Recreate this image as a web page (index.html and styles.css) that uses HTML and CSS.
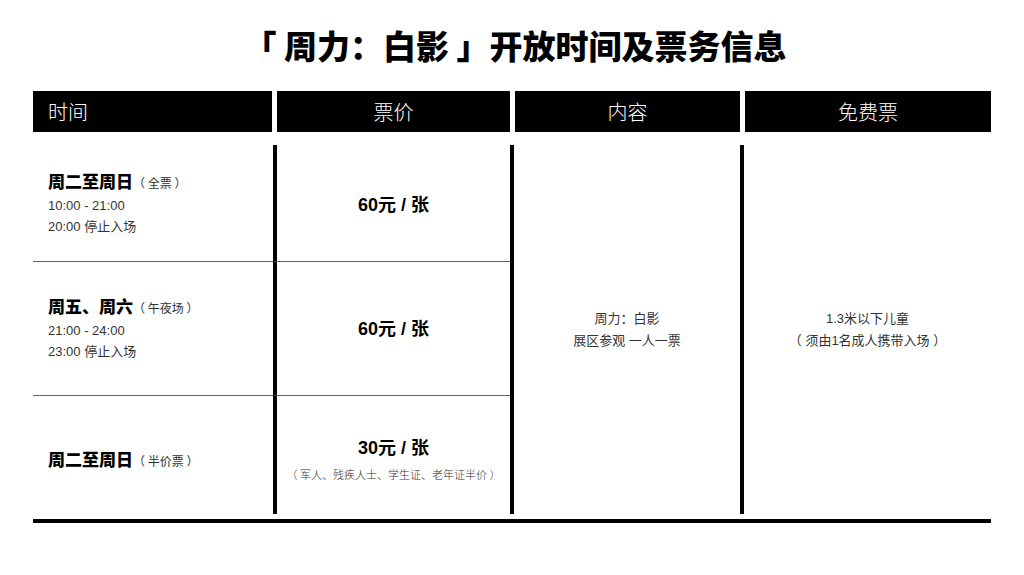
FILE: index.html
```html
<!DOCTYPE html>
<html lang="zh">
<head>
<meta charset="utf-8">
<title>周力：白影 开放时间及票务信息</title>
<link rel="stylesheet" href="styles.css">
</head>
<body>
<div class="page">
  <h1 class="title">「 周力：白影 」开放时间及票务信息</h1>
  <div class="head">
    <div class="hcell hleft">时间</div>
    <div class="hcell">票价</div>
    <div class="hcell">内容</div>
    <div class="hcell">免费票</div>
  </div>
  <div class="body">
    <div class="tcell r1 line">
      <div class="day"><b>周二至周日</b><span class="note">（ 全票 ）</span></div>
      <div class="small">10:00 - 21:00</div>
      <div class="small">20:00 停止入场</div>
    </div>
    <div class="pcell r1 line bl">
      <div class="price">60元 / 张</div>
    </div>
    <div class="ccell bl">
      <div class="small">周力：白影</div>
      <div class="small">展区参观 一人一票</div>
    </div>
    <div class="fcell bl">
      <div class="small">1.3米以下儿童</div>
      <div class="small">（ 须由1名成人携带入场 ）</div>
    </div>
    <div class="tcell r2 line">
      <div class="day"><b>周五、周六</b><span class="note">（ 午夜场 ）</span></div>
      <div class="small">21:00 - 24:00</div>
      <div class="small">23:00 停止入场</div>
    </div>
    <div class="pcell r2 line bl">
      <div class="price">60元 / 张</div>
    </div>
    <div class="tcell r3">
      <div class="day"><b>周二至周日</b><span class="note">（ 半价票 ）</span></div>
    </div>
    <div class="pcell r3 bl">
      <div class="price">30元 / 张</div>
      <div class="tiny">（ 军人、残疾人士、学生证、老年证半价 ）</div>
    </div>
  </div>
  <div class="bottom"></div>
</div>
</body>
</html>
```

FILE: styles.css
```css
html, body {
  margin: 0;
  padding: 0;
  background: #fff;
}
body {
  font-family: "Liberation Sans", "Noto Sans CJK SC", sans-serif;
  color: #000;
}
.page {
  width: 958px;
  padding: 25px 33px 0 33px;
}
.title {
  margin: 0;
  height: 40px;
  line-height: 40px;
  font-family: "Noto Sans CJK SC", sans-serif;
  font-size: 33px;
  font-weight: 900;
  text-align: center;
  padding-left: 6px;
}
.head {
  margin-top: 26px;
  display: grid;
  grid-template-columns: 239px 233px 225px 246px;
  column-gap: 5px;
}
.hcell {
  height: 41px;
  line-height: 41px;
  background: #000;
  color: #fff;
  font-family: "Noto Sans CJK SC", sans-serif;
  font-size: 20px;
  font-weight: 300;
  text-align: center;
}
.hleft {
  text-align: left;
  padding-left: 15px;
}
.body {
  margin-top: 13px;
  display: grid;
  grid-template-columns: 240px 237px 230px 251px;
  grid-template-rows: 117px 134px 118px;
}
.bl {
  border-left: 4px solid #000;
}
.line {
  border-bottom: 1px solid #666;
}
.tcell {
  grid-column: 1;
  display: flex;
  flex-direction: column;
  justify-content: center;
  padding-left: 15px;
}
.pcell {
  grid-column: 2;
  display: flex;
  flex-direction: column;
  justify-content: center;
  align-items: center;
}
.pcell.r1 { padding-top: 3px; }
.r1 { grid-row: 1; }
.r2 { grid-row: 2; }
.r3 { grid-row: 3; padding-top: 10px; }
.ccell, .fcell {
  grid-row: 1 / span 3;
  display: flex;
  flex-direction: column;
  justify-content: center;
  align-items: center;
  text-align: center;
}
.ccell { grid-column: 3; }
.fcell { grid-column: 4; }
.day {
  line-height: 22px;
  margin-bottom: 1px;
}
.day b {
  font-family: "Noto Sans CJK SC", sans-serif;
  font-size: 17px;
  font-weight: 900;
}
.note {
  font-size: 12px;
  color: #333;
  font-weight: 400;
  font-family: "Noto Sans CJK SC", sans-serif;
}
.small {
  font-size: 13px;
  line-height: 21px;
  color: #333;
}
.ccell .small, .fcell .small {
  line-height: 22px;
}
.price {
  font-size: 18px;
  font-weight: 700;
  line-height: 24px;
}
.tiny {
  font-size: 11px;
  line-height: 20px;
  color: #333;
  margin-top: 4px;
  font-family: "Noto Sans CJK SC", sans-serif;
  font-weight: 300;
}
.bottom {
  margin-top: 5px;
  height: 4px;
  background: #000;
}
```
